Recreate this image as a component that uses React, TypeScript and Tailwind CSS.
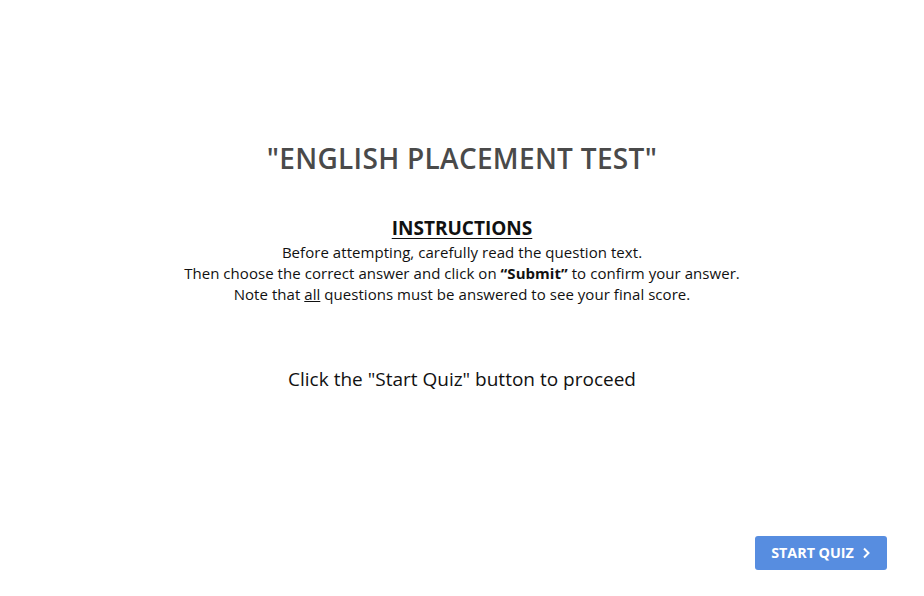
import type { FC } from 'react'

const App: FC = () => {
  return (
    <div className="flex flex-col w-[924px] h-[596px] bg-white font-['Open_Sans',sans-serif]">
      <div className="flex flex-col items-center flex-1 pt-[140px]">
        {/* Title */}
        <h1 className="text-[28px] leading-[36px] font-semibold text-[#4a4a4a] tracking-[0.3px]">
          "ENGLISH PLACEMENT TEST"
        </h1>

        {/* Instructions */}
        <div className="mt-[38px] flex flex-col items-center text-center text-[#111]">
          <h2 className="text-[19px] leading-[28px] font-bold underline underline-offset-[3px]">INSTRUCTIONS</h2>
          <p className="text-[15px] leading-[21px] tracking-[0.05px]">Before attempting, carefully read the question text.</p>
          <p className="text-[15px] leading-[21px] tracking-[0.05px]">
            Then choose the correct answer and click on <b>“Submit”</b> to confirm your answer.
          </p>
          <p className="text-[15px] leading-[21px] tracking-[0.05px]">
            Note that <span className="underline">all</span> questions must be answered to see your final score.
          </p>
        </div>

        <p className="mt-[61px] text-[19px] leading-[26px] text-[#111]">Click the "Start Quiz" button to proceed</p>
      </div>

      {/* Footer */}
      <div className="flex justify-end pr-[37px] pb-[26px]">
        <button className="flex items-center gap-2 h-[34px] w-[132px] justify-center rounded-[3px] bg-[#578de0] text-white text-[14.3px] font-bold">
          START QUIZ
          <svg width="9" height="12" viewBox="0 0 9 12" fill="none">
            <path d="M2 1.5l4.5 4.5L2 10.5" stroke="white" strokeWidth="2" />
          </svg>
        </button>
      </div>
    </div>
  )
}

export default App
